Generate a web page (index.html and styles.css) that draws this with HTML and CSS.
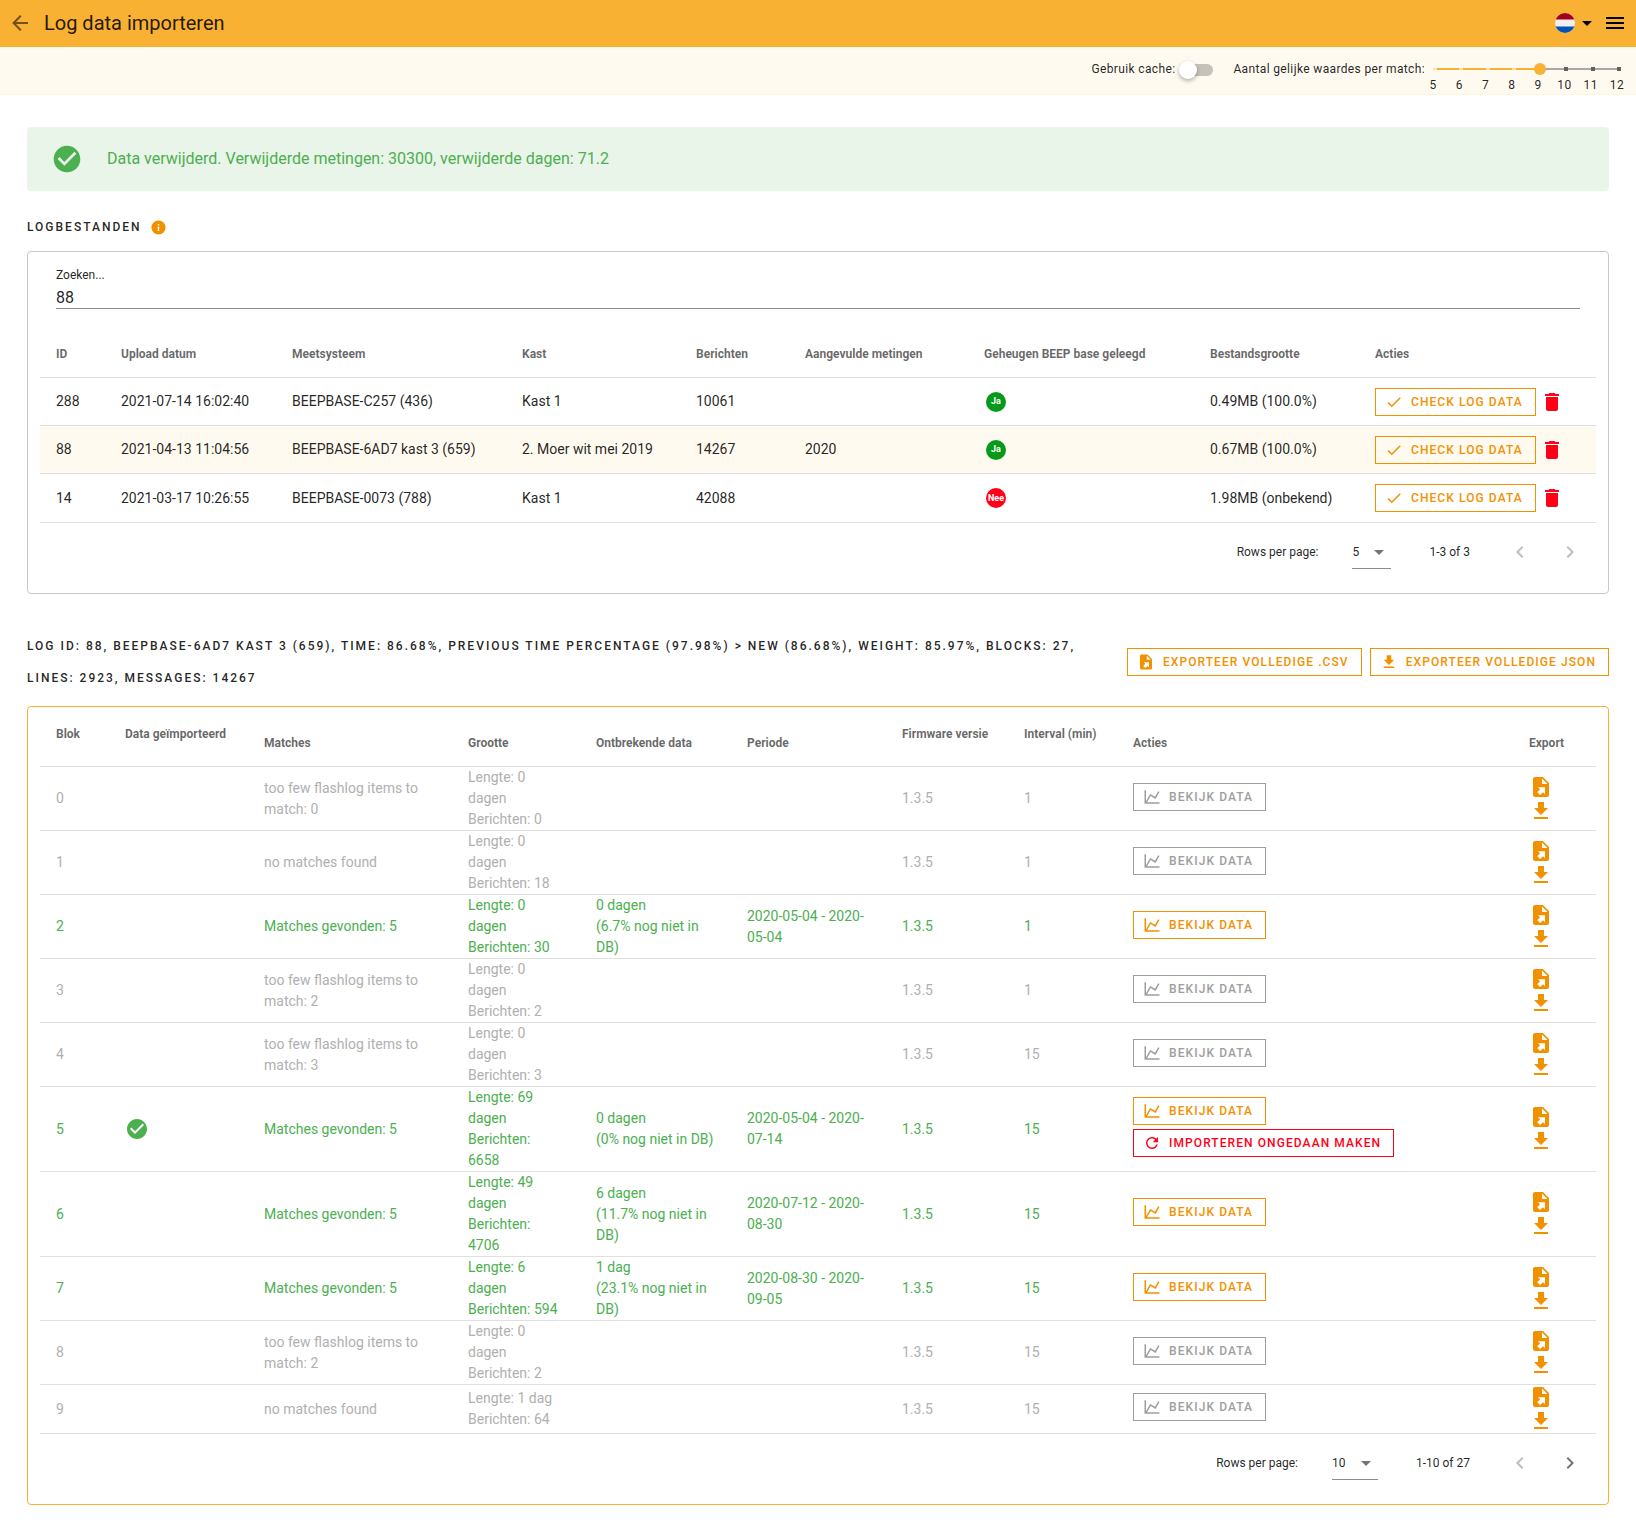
FILE: index.html
```html
<!doctype html>
<html lang="nl">

<head>
    <meta charset="utf-8" />
    <meta name="viewport" content="width=device-width, initial-scale=1" />
    <title>Log data importeren</title>
    <link rel="stylesheet" href="styles.css">
</head>

<body>
    <!-- icon set -->
    <svg class="icon-defs" aria-hidden="true">
        <symbol id="arrow-left" viewBox="0 0 24 24"><path d="M20,11V13H8L13.5,18.5L12.08,19.92L4.16,12L12.08,4.08L13.5,5.5L8,11H20Z"/></symbol>
        <symbol id="menu" viewBox="0 0 24 24"><path d="M3,6H21V8H3V6M3,11H21V13H3V11M3,16H21V18H3V16Z"/></symbol>
        <symbol id="menu-down" viewBox="0 0 24 24"><path d="M7,10L12,15L17,10H7Z"/></symbol>
        <symbol id="check" viewBox="0 0 24 24"><path d="M21,7L9,19L3.5,13.5L4.91,12.09L9,16.17L19.59,5.59L21,7Z"/></symbol>
        <symbol id="check-circle" viewBox="0 0 24 24"><path d="M12 2C6.5 2 2 6.5 2 12S6.5 22 12 22 22 17.5 22 12 17.5 2 12 2M10 17L5 12L6.41 10.59L10 14.17L17.59 6.58L19 8L10 17Z"/></symbol>
        <symbol id="information" viewBox="0 0 24 24"><path d="M13,9H11V7H13M13,17H11V11H13M12,2A10,10 0 0,0 2,12A10,10 0 0,0 12,22A10,10 0 0,0 22,12A10,10 0 0,0 12,2Z"/></symbol>
        <symbol id="delete" viewBox="0 0 24 24"><path d="M19,4H15.5L14.5,3H9.5L8.5,4H5V6H19M6,19A2,2 0 0,0 8,21H16A2,2 0 0,0 18,19V7H6V19Z"/></symbol>
        <symbol id="file-export" viewBox="0 0 24 24"><path d="M6,2C4.89,2 4,2.9 4,4V20A2,2 0 0,0 6,22H18A2,2 0 0,0 20,20V8L14,2M13,3.5L18.5,9H13M8.93,12.22H16V19.29L13.88,17.17L11.05,20L8.22,17.17L11.05,14.35"/></symbol>
        <symbol id="download" viewBox="0 0 24 24"><path d="M5,20H19V18H5M19,9H15V3H9V9H5L12,16L19,9Z"/></symbol>
        <symbol id="chart-line" viewBox="0 0 24 24"><path d="M16,11.78L20.24,4.45L21.97,5.45L16.74,14.5L10.23,10.75L5.46,19H22V21H2V3H4V17.54L9.5,8L16,11.78Z"/></symbol>
        <symbol id="refresh" viewBox="0 0 24 24"><path d="M17.65,6.35C16.2,4.9 14.21,4 12,4A8,8 0 0,0 4,12A8,8 0 0,0 12,20C15.73,20 18.84,17.45 19.73,14H17.65C16.83,16.33 14.61,18 12,18A6,6 0 0,1 6,12A6,6 0 0,1 12,6C13.66,6 15.14,6.69 16.22,7.78L13,11H20V4L17.65,6.35Z"/></symbol>
        <symbol id="chevron-left" viewBox="0 0 24 24"><path d="M15.41,16.58L10.83,12L15.41,7.41L14,6L8,12L14,18L15.41,16.58Z"/></symbol>
        <symbol id="chevron-right" viewBox="0 0 24 24"><path d="M8.59,16.58L13.17,12L8.59,7.41L10,6L16,12L10,18L8.59,16.58Z"/></symbol>
    </svg>

    <header class="app-bar">
        <button class="icon-button back" type="button" aria-label="Terug"><svg class="icon"><use href="#arrow-left"/></svg></button>
        <h1 class="app-title">Log data importeren</h1>
        <button class="icon-button language" type="button" aria-label="Taal">
            <svg class="flag" viewBox="0 0 20 20">
                <clipPath id="round"><circle cx="10" cy="10" r="10"/></clipPath>
                <g clip-path="url(#round)">
                    <rect width="20" height="20" fill="#f0f0f0"/>
                    <rect width="20" height="6.5" fill="#a2001d"/>
                    <rect y="13.5" width="20" height="6.5" fill="#0052b4"/>
                </g>
            </svg>
            <svg class="icon"><use href="#menu-down"/></svg>
        </button>
        <button class="icon-button" type="button" aria-label="Menu"><svg class="icon"><use href="#menu"/></svg></button>
    </header>

    <div class="filter-bar">
        <label for="cache">Gebruik cache:</label>
        <input class="switch" type="checkbox" id="cache">
        <label for="matches">Aantal gelijke waardes per match:</label>
        <div class="slider">
            <input type="range" id="matches" min="5" max="12" value="9">
            <div class="ticks"><span>5</span><span>6</span><span>7</span><span>8</span><span>9</span><span>10</span><span>11</span><span>12</span></div>
        </div>
    </div>

    <main class="content">
        <div class="alert" role="alert">
            <svg class="icon large"><use href="#check-circle"/></svg>
            <span>Data verwijderd. Verwijderde metingen: 30300, verwijderde dagen: 71.2</span>
        </div>

        <div class="section-head">
            <h2 class="overline">Logbestanden</h2>
            <svg class="icon info"><use href="#information"/></svg>
        </div>

        <section class="card">
            <div class="search">
                <label for="search">Zoeken...</label>
                <input type="text" id="search" value="88">
            </div>
            <table class="data-table log-files">
                <colgroup>
                    <col class="c-id"><col class="c-upload"><col class="c-system"><col class="c-hive"><col class="c-messages"><col class="c-added"><col class="c-erased"><col class="c-size"><col class="c-actions">
                </colgroup>
                <thead>
                    <tr><th>ID</th><th>Upload datum</th><th>Meetsysteem</th><th>Kast</th><th>Berichten</th><th>Aangevulde metingen</th><th>Geheugen BEEP base geleegd</th><th>Bestandsgrootte</th><th>Acties</th></tr>
                </thead>
                <tbody>
                    <tr>
                        <td>288</td><td>2021-07-14 16:02:40</td><td>BEEPBASE-C257 (436)</td><td>Kast 1</td><td>10061</td><td></td>
                        <td><span class="chip yes">Ja</span></td><td>0.49MB (100.0%)</td>
                        <td><div class="row-actions"><button class="btn" type="button"><svg class="icon"><use href="#check"/></svg>Check log data</button><button class="icon-button red" type="button" aria-label="Verwijder"><svg class="icon"><use href="#delete"/></svg></button></div></td>
                    </tr>
                    <tr class="selected">
                        <td>88</td><td>2021-04-13 11:04:56</td><td>BEEPBASE-6AD7 kast 3 (659)</td><td>2. Moer wit mei 2019</td><td>14267</td><td>2020</td>
                        <td><span class="chip yes">Ja</span></td><td>0.67MB (100.0%)</td>
                        <td><div class="row-actions"><button class="btn" type="button"><svg class="icon"><use href="#check"/></svg>Check log data</button><button class="icon-button red" type="button" aria-label="Verwijder"><svg class="icon"><use href="#delete"/></svg></button></div></td>
                    </tr>
                    <tr>
                        <td>14</td><td>2021-03-17 10:26:55</td><td>BEEPBASE-0073 (788)</td><td>Kast 1</td><td>42088</td><td></td>
                        <td><span class="chip no">Nee</span></td><td>1.98MB (onbekend)</td>
                        <td><div class="row-actions"><button class="btn" type="button"><svg class="icon"><use href="#check"/></svg>Check log data</button><button class="icon-button red" type="button" aria-label="Verwijder"><svg class="icon"><use href="#delete"/></svg></button></div></td>
                    </tr>
                </tbody>
            </table>
            <div class="table-footer">
                <label for="rows1">Rows per page:</label>
                <div class="select">
                    <select id="rows1"><option>5</option></select>
                    <svg class="icon"><use href="#menu-down"/></svg>
                </div>
                <span class="range">1-3 of 3</span>
                <button class="page-button" type="button" aria-label="Vorige" disabled><svg class="icon"><use href="#chevron-left"/></svg></button>
                <button class="page-button" type="button" aria-label="Volgende" disabled><svg class="icon"><use href="#chevron-right"/></svg></button>
            </div>
        </section>

        <div class="section-head log-head">
            <h2 class="overline">Log ID: 88, BEEPBASE-6AD7 kast 3 (659), time: 86.68%, previous time percentage (97.98%) &gt; new (86.68%), weight: 85.97%, blocks: 27, lines: 2923, messages: 14267</h2>
            <div class="exports">
                <button class="btn" type="button"><svg class="icon"><use href="#file-export"/></svg>Exporteer volledige .csv</button>
                <button class="btn" type="button"><svg class="icon"><use href="#download"/></svg>Exporteer volledige JSON</button>
            </div>
        </div>

        <section class="card highlight">
            <table class="data-table blocks">
                <colgroup>
                    <col class="c-block"><col class="c-imported"><col class="c-matches"><col class="c-length"><col class="c-missing"><col class="c-period"><col class="c-firmware"><col class="c-interval"><col class="c-view"><col class="c-export">
                </colgroup>
                <thead>
                    <tr><th class="sortable">Blok</th><th class="sortable">Data geïmporteerd</th><th>Matches</th><th>Grootte</th><th>Ontbrekende data</th><th>Periode</th><th class="sortable">Firmware versie</th><th class="sortable">Interval (min)</th><th>Acties</th><th>Export</th></tr>
                </thead>
                <tbody>
                    <tr class="muted">
                        <td>0</td><td></td><td>too few flashlog items to match: 0</td><td>Lengte: 0 dagen<br>Berichten: 0</td><td></td><td></td><td>1.3.5</td><td>1</td>
                        <td><div class="stack"><button class="btn grey" type="button"><svg class="icon"><use href="#chart-line"/></svg>Bekijk data</button></div></td>
                        <td><div class="export-icons"><button class="icon-button" type="button" aria-label="CSV"><svg class="icon"><use href="#file-export"/></svg></button><button class="icon-button" type="button" aria-label="JSON"><svg class="icon"><use href="#download"/></svg></button></div></td>
                    </tr>
                    <tr class="muted">
                        <td>1</td><td></td><td>no matches found</td><td>Lengte: 0 dagen<br>Berichten: 18</td><td></td><td></td><td>1.3.5</td><td>1</td>
                        <td><div class="stack"><button class="btn grey" type="button"><svg class="icon"><use href="#chart-line"/></svg>Bekijk data</button></div></td>
                        <td><div class="export-icons"><button class="icon-button" type="button" aria-label="CSV"><svg class="icon"><use href="#file-export"/></svg></button><button class="icon-button" type="button" aria-label="JSON"><svg class="icon"><use href="#download"/></svg></button></div></td>
                    </tr>
                    <tr class="found">
                        <td>2</td><td></td><td>Matches gevonden: 5</td><td>Lengte: 0 dagen<br>Berichten: 30</td><td>0 dagen<br>(6.7% nog niet in DB)</td><td>2020-05-04 - 2020-05-04</td><td>1.3.5</td><td>1</td>
                        <td><div class="stack"><button class="btn" type="button"><svg class="icon"><use href="#chart-line"/></svg>Bekijk data</button></div></td>
                        <td><div class="export-icons"><button class="icon-button" type="button" aria-label="CSV"><svg class="icon"><use href="#file-export"/></svg></button><button class="icon-button" type="button" aria-label="JSON"><svg class="icon"><use href="#download"/></svg></button></div></td>
                    </tr>
                    <tr class="muted">
                        <td>3</td><td></td><td>too few flashlog items to match: 2</td><td>Lengte: 0 dagen<br>Berichten: 2</td><td></td><td></td><td>1.3.5</td><td>1</td>
                        <td><div class="stack"><button class="btn grey" type="button"><svg class="icon"><use href="#chart-line"/></svg>Bekijk data</button></div></td>
                        <td><div class="export-icons"><button class="icon-button" type="button" aria-label="CSV"><svg class="icon"><use href="#file-export"/></svg></button><button class="icon-button" type="button" aria-label="JSON"><svg class="icon"><use href="#download"/></svg></button></div></td>
                    </tr>
                    <tr class="muted">
                        <td>4</td><td></td><td>too few flashlog items to match: 3</td><td>Lengte: 0 dagen<br>Berichten: 3</td><td></td><td></td><td>1.3.5</td><td>15</td>
                        <td><div class="stack"><button class="btn grey" type="button"><svg class="icon"><use href="#chart-line"/></svg>Bekijk data</button></div></td>
                        <td><div class="export-icons"><button class="icon-button" type="button" aria-label="CSV"><svg class="icon"><use href="#file-export"/></svg></button><button class="icon-button" type="button" aria-label="JSON"><svg class="icon"><use href="#download"/></svg></button></div></td>
                    </tr>
                    <tr class="found">
                        <td>5</td><td><svg class="icon"><use href="#check-circle"/></svg></td><td>Matches gevonden: 5</td><td>Lengte: 69 dagen<br>Berichten: 6658</td><td>0 dagen<br>(0% nog niet in DB)</td><td>2020-05-04 - 2020-07-14</td><td>1.3.5</td><td>15</td>
                        <td><div class="stack"><button class="btn" type="button"><svg class="icon"><use href="#chart-line"/></svg>Bekijk data</button><button class="btn red" type="button"><svg class="icon"><use href="#refresh"/></svg>Importeren ongedaan maken</button></div></td>
                        <td><div class="export-icons"><button class="icon-button" type="button" aria-label="CSV"><svg class="icon"><use href="#file-export"/></svg></button><button class="icon-button" type="button" aria-label="JSON"><svg class="icon"><use href="#download"/></svg></button></div></td>
                    </tr>
                    <tr class="found">
                        <td>6</td><td></td><td>Matches gevonden: 5</td><td>Lengte: 49 dagen<br>Berichten: 4706</td><td>6 dagen<br>(11.7% nog niet in DB)</td><td>2020-07-12 - 2020-08-30</td><td>1.3.5</td><td>15</td>
                        <td><div class="stack"><button class="btn" type="button"><svg class="icon"><use href="#chart-line"/></svg>Bekijk data</button></div></td>
                        <td><div class="export-icons"><button class="icon-button" type="button" aria-label="CSV"><svg class="icon"><use href="#file-export"/></svg></button><button class="icon-button" type="button" aria-label="JSON"><svg class="icon"><use href="#download"/></svg></button></div></td>
                    </tr>
                    <tr class="found">
                        <td>7</td><td></td><td>Matches gevonden: 5</td><td>Lengte: 6 dagen<br>Berichten: 594</td><td>1 dag<br>(23.1% nog niet in DB)</td><td>2020-08-30 - 2020-09-05</td><td>1.3.5</td><td>15</td>
                        <td><div class="stack"><button class="btn" type="button"><svg class="icon"><use href="#chart-line"/></svg>Bekijk data</button></div></td>
                        <td><div class="export-icons"><button class="icon-button" type="button" aria-label="CSV"><svg class="icon"><use href="#file-export"/></svg></button><button class="icon-button" type="button" aria-label="JSON"><svg class="icon"><use href="#download"/></svg></button></div></td>
                    </tr>
                    <tr class="muted">
                        <td>8</td><td></td><td>too few flashlog items to match: 2</td><td>Lengte: 0 dagen<br>Berichten: 2</td><td></td><td></td><td>1.3.5</td><td>15</td>
                        <td><div class="stack"><button class="btn grey" type="button"><svg class="icon"><use href="#chart-line"/></svg>Bekijk data</button></div></td>
                        <td><div class="export-icons"><button class="icon-button" type="button" aria-label="CSV"><svg class="icon"><use href="#file-export"/></svg></button><button class="icon-button" type="button" aria-label="JSON"><svg class="icon"><use href="#download"/></svg></button></div></td>
                    </tr>
                    <tr class="muted">
                        <td>9</td><td></td><td>no matches found</td><td>Lengte: 1 dag<br>Berichten: 64</td><td></td><td></td><td>1.3.5</td><td>15</td>
                        <td><div class="stack"><button class="btn grey" type="button"><svg class="icon"><use href="#chart-line"/></svg>Bekijk data</button></div></td>
                        <td><div class="export-icons"><button class="icon-button" type="button" aria-label="CSV"><svg class="icon"><use href="#file-export"/></svg></button><button class="icon-button" type="button" aria-label="JSON"><svg class="icon"><use href="#download"/></svg></button></div></td>
                    </tr>
                </tbody>
            </table>
            <div class="table-footer">
                <label for="rows2">Rows per page:</label>
                <div class="select wide">
                    <select id="rows2"><option>10</option></select>
                    <svg class="icon"><use href="#menu-down"/></svg>
                </div>
                <span class="range">1-10 of 27</span>
                <button class="page-button" type="button" aria-label="Vorige" disabled><svg class="icon"><use href="#chevron-left"/></svg></button>
                <button class="page-button" type="button" aria-label="Volgende"><svg class="icon"><use href="#chevron-right"/></svg></button>
            </div>
        </section>
    </main>
</body>

</html>
```
FILE: styles.css
```css
* {
    box-sizing: border-box;
}

body {
    margin: 0;
    background: #fff;
    color: rgba(0, 0, 0, 0.87);
    font-family: Roboto, "Liberation Sans", sans-serif;
    font-size: 14px;
    line-height: 21px;
}

button, input, select {
    font-family: inherit;
    color: inherit;
    margin: 0;
}

.icon-defs {
    display: none;
}

.icon {
    display: block;
    flex: none;
    width: 24px;
    height: 24px;
    fill: currentColor;
}

.icon.large {
    width: 32px;
    height: 32px;
}

.icon-button {
    display: flex;
    align-items: center;
    padding: 0;
    border: 0;
    background: none;
    cursor: pointer;
}

/* top bar */
.app-bar {
    display: flex;
    align-items: center;
    height: 47px;
    padding: 0 9px 1px 8px;
    background: #f8b133;
    color: #000;
}

.back {
    color: rgba(0, 0, 0, 0.54);
}

.app-title {
    flex: 1;
    margin: 0 0 0 12px;
    color: rgba(0, 0, 0, 0.87);
    font-size: 20px;
    font-weight: 400;
    line-height: 32px;
}

.language {
    margin-right: 4px;
}

.flag {
    width: 20px;
    height: 20px;
}

/* filter bar */
.filter-bar {
    display: flex;
    justify-content: flex-end;
    align-items: flex-start;
    height: 48px;
    padding: 10px 11px 0;
    background: #fffaf0;
    border-bottom: 1px solid #fdf5dc;
    font-size: 12px;
    line-height: 24px;
    letter-spacing: 0.03em;
}

.switch {
    appearance: none;
    width: 28px;
    height: 12px;
    margin: 7px 20px 0 10px;
    border-radius: 6px;
    background: #c6c1b9;
}

.switch::before {
    content: "";
    display: block;
    width: 18px;
    height: 18px;
    margin: -3px 0 0 -6px;
    border-radius: 50%;
    background: #fff;
    box-shadow: 0 2px 4px rgba(0, 0, 0, 0.3);
}

.switch:checked::before {
    margin-left: 16px;
}

.slider {
    display: flex;
    flex-direction: column;
    width: 200px;
}

/* rail with tick marks, filled up to the thumb */
.slider input {
    appearance: none;
    width: 196px;
    height: 12px;
    margin: 6px 0 4px 4px;
    background:
        linear-gradient(#fde0ab, #fde0ab) 4px 5px / 4px 2px,
        linear-gradient(#fde0ab, #fde0ab) 30px 5px / 4px 2px,
        linear-gradient(#fde0ab, #fde0ab) 57px 5px / 4px 2px,
        linear-gradient(#fde0ab, #fde0ab) 83px 5px / 4px 2px,
        linear-gradient(#616161, #616161) 135px 4px / 4px 4px,
        linear-gradient(#616161, #616161) 162px 4px / 4px 4px,
        linear-gradient(#616161, #616161) 188px 4px / 4px 4px,
        linear-gradient(#f8b133, #f8b133) 6px 5px / 105px 2px,
        linear-gradient(#a9a9a9, #a9a9a9) 111px 5px / 79px 2px;
    background-repeat: no-repeat;
}

.slider input::-webkit-slider-thumb {
    appearance: none;
    width: 12px;
    height: 12px;
    border-radius: 50%;
    background: #f8b133;
}

.ticks {
    display: flex;
    justify-content: space-between;
    line-height: 12px;
}

.ticks span {
    width: 16px;
    text-align: center;
}

/* page */
.content {
    padding: 32px 27px 27px;
}

.alert {
    display: flex;
    align-items: center;
    gap: 24px;
    height: 64px;
    padding: 0 24px;
    border-radius: 4px;
    background: #eaf5ea;
    color: #4caf50;
    font-size: 16px;
    line-height: 24px;
}

.section-head {
    display: flex;
    align-items: center;
    gap: 8px;
    margin: 20px 0 8px;
}

.log-head {
    justify-content: space-between;
    gap: 24px;
    margin: 36px 0 12px;
}

.overline {
    margin: 0;
    font-size: 12px;
    font-weight: 500;
    line-height: 32px;
    letter-spacing: 2px;
    text-transform: uppercase;
}

.info {
    width: 17px;
    height: 17px;
    color: #f29100;
}

.exports {
    display: flex;
    flex: none;
    gap: 8px;
}

.card {
    padding: 12px;
    border: 1px solid #c8c8c8;
    border-radius: 4px;
}

.card.highlight {
    border-color: #f8b133;
}

.search {
    display: flex;
    flex-direction: column;
    margin: 0 16px 21px;
}

.search label {
    font-size: 12px;
    line-height: 22px;
}

.search input {
    height: 23px;
    padding: 0;
    border: 0;
    border-bottom: 1px solid #8c8c8c;
    outline: 0;
    background: none;
    font-size: 16px;
}

/* buttons */
.btn {
    display: inline-flex;
    align-items: center;
    height: 28px;
    padding: 0 12px 0 9px;
    border: 1px solid #f29100;
    background: none;
    color: #f29100;
    font-size: 12px;
    font-weight: 500;
    letter-spacing: 0.09em;
    text-transform: uppercase;
    white-space: nowrap;
    cursor: pointer;
}

.btn .icon {
    width: 18px;
    height: 18px;
    margin-right: 8px;
}

.btn.grey {
    border-color: #9e9e9e;
    color: #9e9e9e;
}

.btn.red {
    border-color: #ff0019;
    color: #ff0019;
}

.icon-button.red {
    color: #ff0019;
}

/* tables */
.data-table {
    width: 100%;
    table-layout: fixed;
    border-spacing: 0;
}

.data-table th,
.data-table td {
    height: 48px;
    padding: 0 16px;
    border-bottom: 1px solid #e0e0e0;
    text-align: left;
    vertical-align: middle;
}

.data-table th {
    padding-top: 2px;
    color: rgba(0, 0, 0, 0.6);
    font-size: 12px;
    font-weight: 700;
    white-space: nowrap;
}

.data-table th.sortable {
    padding-bottom: 18px;
}

.data-table tbody tr:last-child td {
    border-bottom: 0;
}

.selected td {
    background: #fffaf0;
}

.muted td {
    color: #b0b0b0;
}

.found td {
    color: #4caf50;
}

.c-id { width: 65px; }
.c-upload { width: 171px; }
.c-system { width: 230px; }
.c-hive { width: 174px; }
.c-messages { width: 109px; }
.c-added { width: 179px; }
.c-erased { width: 226px; }
.c-size { width: 165px; }
.c-actions { width: 237px; }

.c-block { width: 69px; }
.c-imported { width: 139px; }
.c-matches { width: 204px; }
.c-length { width: 128px; }
.c-missing { width: 151px; }
.c-period { width: 155px; }
.c-firmware { width: 122px; }
.c-interval { width: 109px; }
.c-view { width: 396px; }
.c-export { width: 83px; }

.chip {
    display: flex;
    align-items: center;
    justify-content: center;
    width: 20px;
    height: 20px;
    margin-left: 2px;
    border-radius: 50%;
    color: #fff;
    font-size: 9px;
    font-weight: 700;
}

.chip.yes {
    background: #069a1a;
}

.chip.no {
    background: #ff0019;
}

.row-actions {
    display: flex;
    align-items: center;
    gap: 4px;
}

.stack {
    display: flex;
    flex-direction: column;
    align-items: flex-start;
    gap: 4px;
    padding-bottom: 4px;
}

.export-icons {
    color: #f29100;
}

/* table footer */
.table-footer {
    display: flex;
    align-items: center;
    justify-content: flex-end;
    height: 59px;
    padding-right: 8px;
    border-top: 1px solid #e0e0e0;
    font-size: 12px;
}

.select {
    display: grid;
    align-items: center;
    justify-items: end;
    width: 39px;
    margin: 0 38px 0 34px;
}

.select.wide {
    width: 46px;
}

.select select,
.select .icon {
    grid-area: 1 / 1;
}

.select select {
    appearance: none;
    width: 100%;
    height: 34px;
    padding: 0;
    border: 0;
    border-bottom: 1px solid #8c8c8c;
    border-radius: 0;
    background: none;
    font-size: 12px;
}

.select .icon {
    color: rgba(0, 0, 0, 0.54);
    pointer-events: none;
}

.range {
    margin-right: 32px;
}

.page-button {
    display: flex;
    align-items: center;
    justify-content: center;
    width: 36px;
    height: 36px;
    padding: 0;
    border: 0;
    background: none;
    color: rgba(0, 0, 0, 0.54);
}

.page-button + .page-button {
    margin-left: 14px;
}

.page-button:disabled {
    color: rgba(0, 0, 0, 0.26);
}
```
